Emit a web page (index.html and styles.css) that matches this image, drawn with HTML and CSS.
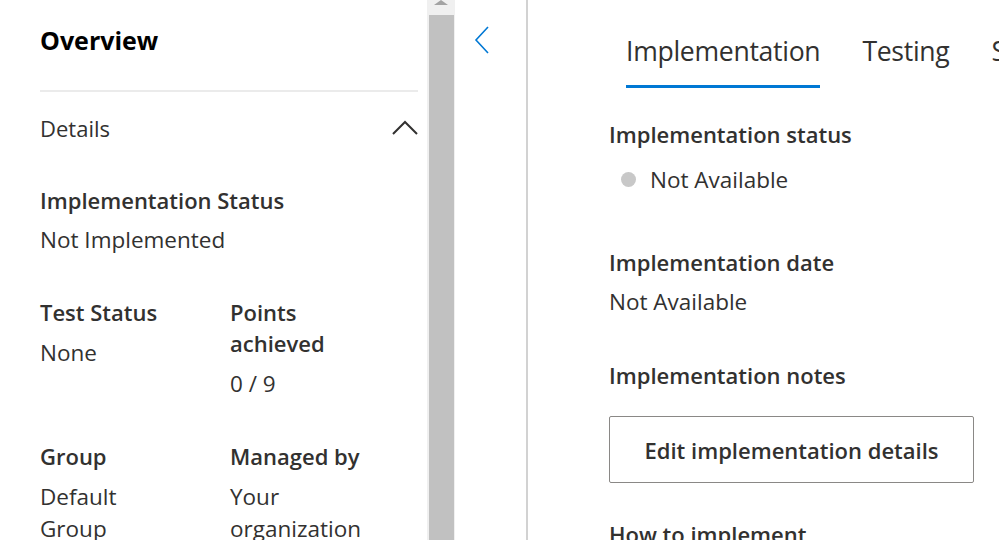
FILE: index.html
```html
<!DOCTYPE html>
<html>
<head>
<meta charset="utf-8">
<link rel="stylesheet" href="styles.css">
</head>
<body>
<div class="page">
  <aside class="overview">
    <h1 class="title">Overview</h1>
    <div class="divider"></div>
    <div class="section-head">
      <span class="section-name">Details</span>
      <svg class="chev-up" width="26" height="15" viewBox="0 0 26 15"><path d="M1 14 L13 2 L25 14" fill="none" stroke="#323130" stroke-width="2"/></svg>
    </div>
    <div class="item full">
      <div class="label">Implementation Status</div>
      <div class="value">Not Implemented</div>
    </div>
    <div class="grid">
      <div class="item">
        <div class="label">Test Status</div>
        <div class="value">None</div>
      </div>
      <div class="item">
        <div class="label">Points achieved</div>
        <div class="value">0 / 9</div>
      </div>
      <div class="item">
        <div class="label">Group</div>
        <div class="value">Default Group</div>
      </div>
      <div class="item">
        <div class="label">Managed by</div>
        <div class="value">Your organization</div>
      </div>
    </div>
  </aside>
  <div class="scrollbar">
    <div class="arrow"></div>
    <div class="thumb"></div>
  </div>
  <div class="collapse">
    <svg class="chev-left" width="16" height="28" viewBox="0 0 16 28"><path d="M14 1 L2 14 L14 27" fill="none" stroke="#0078d4" stroke-width="1.6"/></svg>
  </div>
  <main class="detail">
    <nav class="tabs">
      <span class="tab active">Implementation</span>
      <span class="tab">Testing</span>
      <span class="tab">Standards</span>
    </nav>
    <div class="field f1">
      <div class="flabel">Implementation status</div>
      <div class="fvalue status"><span class="dot"></span>Not Available</div>
    </div>
    <div class="field f2">
      <div class="flabel">Implementation date</div>
      <div class="fvalue">Not Available</div>
    </div>
    <div class="field f3">
      <div class="flabel">Implementation notes</div>
      <button class="edit">Edit implementation details</button>
    </div>
    <div class="field f4">
      <div class="flabel">How to implement</div>
    </div>
  </main>
</div>
</body>
</html>
```
FILE: styles.css
```css
* { box-sizing: border-box; }
html, body { margin: 0; padding: 0; background: #fff; }
body {
  width: 999px; height: 540px; overflow: hidden;
  font-family: "Open Sans", "Noto Sans", sans-serif;
  color: #323130;
}
.page { display: flex; height: 540px; }

.overview { width: 427px; flex: none; padding: 0 9px 0 40px; }
.title { margin: 0; padding-top: 24px; height: 90px; font-size: 25px; line-height: 32px; font-weight: 700; color: #000; }
.divider { height: 2px; background: #ebebeb; }
.section-head { display: flex; justify-content: space-between; align-items: center; height: 93px; padding-bottom: 21px; }
.section-name { font-size: 22px; }
.chev-up { margin-top: -2px; }

.label { font-size: 22px; font-weight: 600; line-height: 31px; }
.value { font-size: 22.5px; line-height: 31px; margin-top: 8px; }
.grid { display: grid; grid-template-columns: 145px 145px; column-gap: 45px; row-gap: 41px; margin-top: 42px; }
.grid .value { line-height: 32px; margin-top: 9px; }

.scrollbar { width: 28px; flex: none; background: #f0f0f0; display: flex; flex-direction: column; align-items: center; }
.arrow { width: 0; height: 0; border-left: 7px solid transparent; border-right: 7px solid transparent; border-bottom: 5px solid #a3a3a3; }
.thumb { width: 25px; margin-top: 10px; flex: 1; background: #c1c1c1; }

.collapse { width: 73px; flex: none; border-right: 2px solid #d2d2d2; padding: 26px 0 0 19px; }
.chev-left { display: block; }

.detail { flex: 1; padding-left: 81px; overflow: hidden; }
.tabs { display: flex; gap: 42px; height: 88px; padding-left: 17px; padding-top: 33px; white-space: nowrap; }
.tab { font-size: 26.6px; letter-spacing: -0.3px; line-height: 36px; height: 55px; }
.tab.active { border-bottom: 3px solid #0078d4; }

.flabel { font-size: 22px; font-weight: 600; line-height: 31px; }
.fvalue { font-size: 22.5px; line-height: 31px; }
.f1 { margin-top: 31px; }
.f1 .fvalue { margin-top: 14px; }
.status { display: flex; align-items: center; padding-left: 12px; }
.dot { width: 15px; height: 15px; border-radius: 50%; background: #c8c8c8; margin-right: 14px; }
.f2 { margin-top: 52px; }
.f2 .fvalue { margin-top: 8px; }
.f3 { margin-top: 43px; }
.edit {
  display: block; margin-top: 25px; width: 365px; height: 67px;
  background: #fff; border: 1px solid #8a8886; border-radius: 2px;
  font-family: inherit; font-size: 22px; font-weight: 600; color: #323130;
}
.f4 { margin-top: 36px; }
```
